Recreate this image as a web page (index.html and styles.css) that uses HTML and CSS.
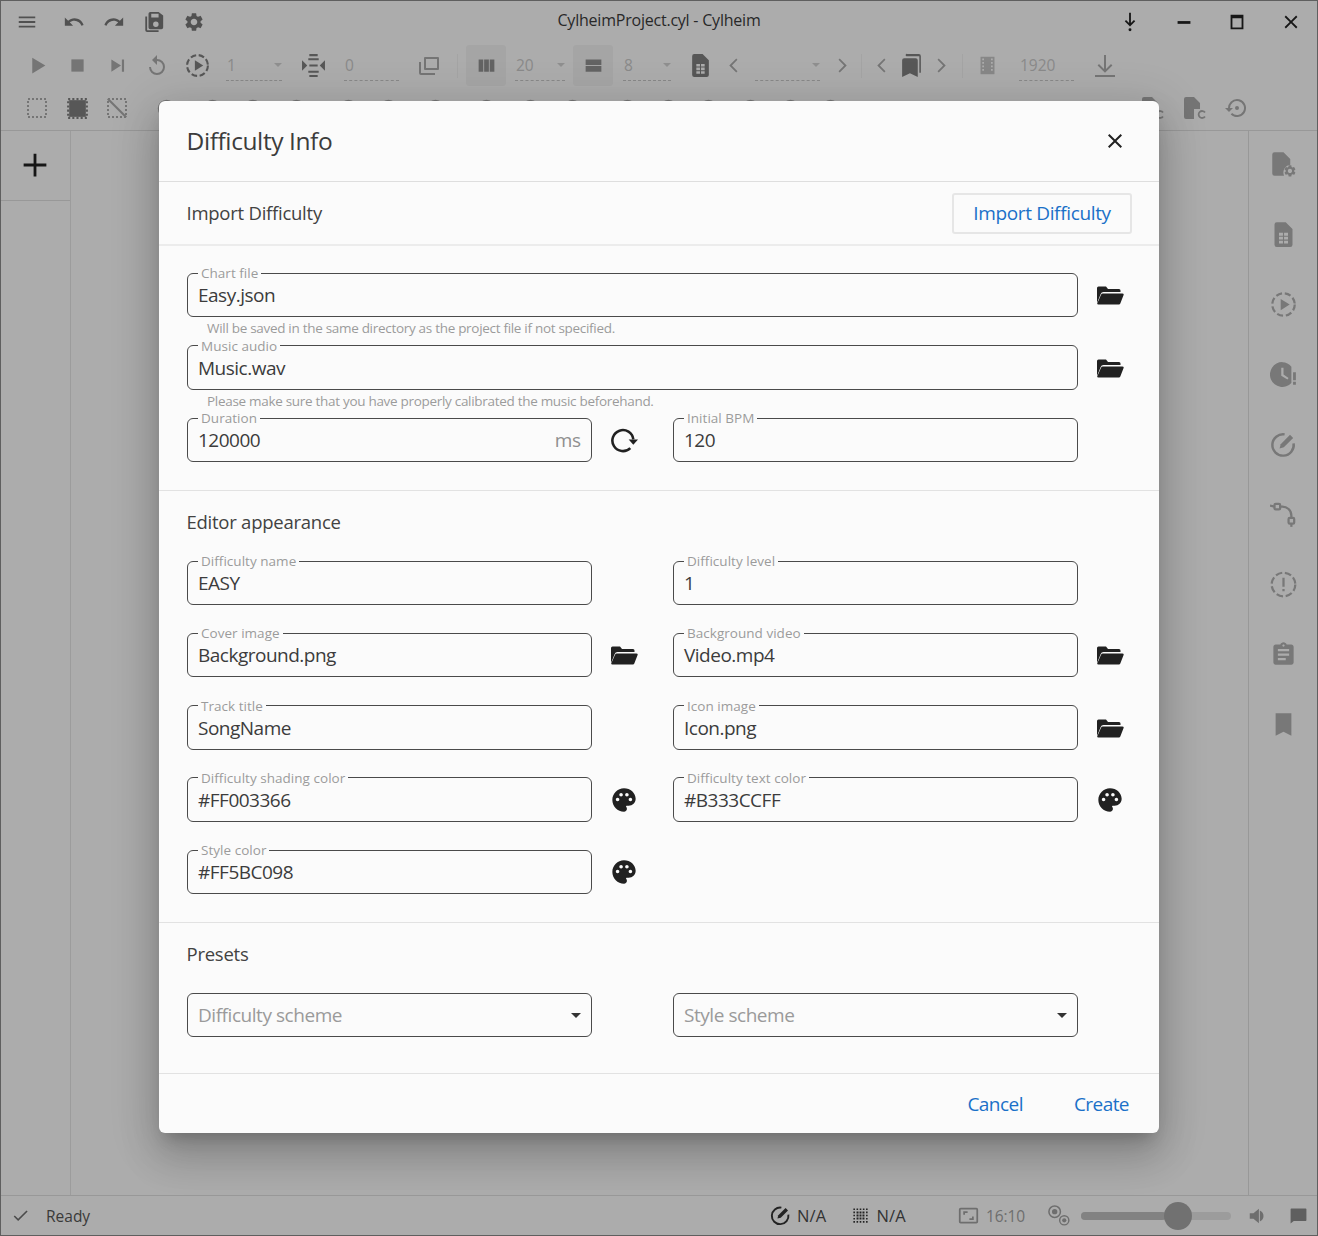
FILE: index.html
```html
<!DOCTYPE html>
<html lang="en">
<head>
<meta charset="utf-8">
<title>Cylheim</title>
<link rel="stylesheet" href="styles.css">
</head>
<body>
<svg class="defs" aria-hidden="true">
  <symbol id="menu" viewBox="0 0 24 24"><path d="M3 18h18v-2H3v2zm0-5h18v-2H3v2zm0-7v2h18V6H3z"/></symbol>
  <symbol id="undo" viewBox="0 0 24 24"><path d="M12.5 8c-2.65 0-5.05.99-6.9 2.6L2 7v9h9l-3.62-3.62c1.39-1.16 3.16-1.88 5.12-1.88 3.54 0 6.55 2.31 7.6 5.5l2.37-.78C21.08 11.03 17.15 8 12.5 8z"/></symbol>
  <symbol id="redo" viewBox="0 0 24 24"><path d="M18.4 10.6C16.55 8.99 14.15 8 11.5 8c-4.65 0-8.58 3.03-9.96 7.22L3.9 16c1.05-3.19 4.05-5.5 7.6-5.5 1.95 0 3.73.72 5.12 1.88L13 16h9V7l-3.6 3.6z"/></symbol>
  <symbol id="saveall" viewBox="0 0 24 24"><path d="M2.5 6H4.500V21H17v2H4.500a2 2 0 0 1-2-2z"/><path d="M8 1h9l5 4v13a2 2 0 0 1-2 2H8a2 2 0 0 1-2-2V3a2 2 0 0 1 2-2zm1 2v4h8V3zm5 8.500a3 3 0 1 0 0 6 3 3 0 0 0 0-6z" fill-rule="evenodd"/></symbol>
  <symbol id="gear" viewBox="0 0 24 24"><path d="M19.140 12.940c.04-.3.06-.61.06-.94 0-.32-.02-.64-.07-.94l2.030-1.580c.18-.14.23-.41.12-.61l-1.920-3.320c-.12-.22-.37-.29-.59-.22l-2.390.96c-.5-.38-1.030-.7-1.620-.94l-.36-2.540c-.04-.24-.24-.41-.48-.41h-3.840c-.24 0-.43.17-.47.41l-.36 2.540c-.59.24-1.130.57-1.620.94l-2.390-.96c-.22-.08-.47 0-.59.22L2.740 8.870c-.12.21-.08.47.12.61l2.030 1.580c-.05.3-.09.63-.09.94s.02.64.07.94l-2.030 1.580c-.18.14-.23.41-.12.61l1.920 3.320c.12.22.37.29.59.22l2.390-.96c.5.38 1.030.7 1.620.94l.36 2.540c.05.24.24.41.48.41h3.840c.24 0 .44-.17.47-.41l.36-2.540c.59-.24 1.130-.56 1.620-.94l2.390.96c.22.08.47 0 .59-.22l1.920-3.320c.12-.22.07-.47-.12-.61l-2.010-1.580zM12 15.600c-1.980 0-3.600-1.620-3.600-3.600s1.620-3.600 3.600-3.600 3.600 1.620 3.600 3.600-1.620 3.600-3.600 3.600z"/></symbol>
  <symbol id="pin" viewBox="0 0 24 24"><path d="M11 2h2v11l3.300-3.300 1.400 1.400L12 16.800l-5.700-5.700 1.400-1.400L11 13z"/><circle cx="12" cy="20.500" r="1.600"/></symbol>
  <symbol id="min" viewBox="0 0 24 24"><rect x="5" y="11" width="14" height="3"/></symbol>
  <symbol id="max" viewBox="0 0 24 24"><path d="M5 4h14v16H5zm2 4v10h10V8z" fill-rule="evenodd"/></symbol>
  <symbol id="close" viewBox="0 0 24 24"><path d="M19 6.410L17.590 5 12 10.590 6.410 5 5 6.410 10.590 12 5 17.590 6.410 19 12 13.410 17.590 19 19 17.590 13.410 12z"/></symbol>
  <symbol id="play" viewBox="0 0 24 24"><path d="M6 3l15 9-15 9z"/></symbol>
  <symbol id="stop" viewBox="0 0 24 24"><rect x="5" y="5" width="14" height="14"/></symbol>
  <symbol id="next" viewBox="0 0 24 24"><path d="M5 5l11 7-11 7zM17 5h2.500v14H17z"/></symbol>
  <symbol id="replay" viewBox="0 0 24 24"><path d="M12 5V1L7 6l5 5V7a6 6 0 1 1-6 6H4a8 8 0 1 0 8-8z"/></symbol>
  <symbol id="dashplay" viewBox="0 0 24 24"><circle cx="12" cy="12" r="10" fill="none" stroke="currentColor" stroke-width="2" stroke-dasharray="5.500 2.500"/><path d="M9.500 7l8 5-8 5z"/></symbol>
  <symbol id="fit" viewBox="0 0 24 24"><path d="M8 1h8v2H8zM7 5h10v2H7zM8 11h8v2H8zM7 17h10v2H7zM8 21h8v2H8zM1 7l5 5-5 5zM23 7l-5 5 5 5z"/></symbol>
  <symbol id="layers" viewBox="0 0 24 24"><path d="M8 3h13a1 1 0 0 1 1 1v11a1 1 0 0 1-1 1H8a1 1 0 0 1-1-1V4a1 1 0 0 1 1-1zm1 2v9h11V5zM2 8h2v11h14v2H4a2 2 0 0 1-2-2z" fill-rule="evenodd"/></symbol>
  <symbol id="cols" viewBox="0 0 24 24"><path d="M3 5h5.300v14H3zM9.300 5h5.400v14H9.300zM15.700 5H21v14h-5.300z"/></symbol>
  <symbol id="rows" viewBox="0 0 24 24"><path d="M3 5h18v6.300H3zM3 12.700h18V19H3z"/></symbol>
  <symbol id="filegrid" viewBox="0 0 24 24"><path d="M14 1H6a2 2 0 0 0-2 2v18a2 2 0 0 0 2 2h12a2 2 0 0 0 2-2V7zM8 10.500h3.500V13H8zm4.500 0H16V13h-3.500zM8 14h3.500v2.500H8zm4.500 0H16v2.500h-3.500zM8 17.500h3.500V20H8zm4.500 0H16V20h-3.500z" fill-rule="evenodd"/></symbol>
  <symbol id="left" viewBox="0 0 24 24"><path d="M15.400 5.400L9 12l6.400 6.600L14 20l-8-8 8-8z"/></symbol>
  <symbol id="right" viewBox="0 0 24 24"><path d="M8.600 5.400L15 12l-6.400 6.600L10 20l8-8-8-8z"/></symbol>
  <symbol id="bookmarks" viewBox="0 0 24 24"><path d="M16 5H5a2 2 0 0 0-2 2v16l7.500-3.500L18 23V7a2 2 0 0 0-2-2z"/><path d="M8 1h11a2 2 0 0 1 2 2v16h-1.500V3H7a1 1 0 0 1 1-2z"/></symbol>
  <symbol id="film" viewBox="0 0 24 24"><path d="M4 2h16v20H4zM6 4v2h2V4zm0 4v2h2V8zm0 4v2h2v-2zm0 4v2h2v-2zM16 4v2h2V4zm0 4v2h2V8zm0 4v2h2v-2zm0 4v2h2v-2z" fill-rule="evenodd"/></symbol>
  <symbol id="download" viewBox="0 0 24 24"><path d="M11 1h2v14l5-5 1.400 1.400L12 18.800l-7.400-7.400L6 10l5 5zM2 21h20v2H2z"/></symbol>
  <symbol id="selnone" viewBox="0 0 24 24"><rect x="3" y="3" width="18" height="18" fill="none" stroke="currentColor" stroke-width="2" stroke-dasharray="2 2"/></symbol>
  <symbol id="selall" viewBox="0 0 24 24"><rect x="3" y="3" width="18" height="18" fill="none" stroke="currentColor" stroke-width="2" stroke-dasharray="2 2"/><rect x="4" y="4" width="16" height="16"/></symbol>
  <symbol id="selinv" viewBox="0 0 24 24"><rect x="3" y="3" width="18" height="18" fill="none" stroke="currentColor" stroke-width="2" stroke-dasharray="2 2"/><path d="M2 3.500L3.500 2 22 20.500 20.500 22z"/></symbol>
  <symbol id="blob" viewBox="0 0 24 24"><circle cx="12" cy="12" r="9" fill="none" stroke="currentColor" stroke-width="2"/></symbol>
  <symbol id="filesync" viewBox="0 0 24 24"><path d="M12 1H4a2 2 0 0 0-2 2v18a2 2 0 0 0 2 2h8V13h6V7z"/><path d="M23 16.500a3.500 3.500 0 1 0 0 4" fill="none" stroke="currentColor" stroke-width="1.800"/></symbol>
  <symbol id="history" viewBox="0 0 24 24"><path d="M13 3a9 9 0 0 0-9 9H1l4 4 4-4H6a7 7 0 1 1 2.100 5l-1.400 1.400A9 9 0 1 0 13 3z"/><circle cx="13" cy="12" r="2"/></symbol>
  <symbol id="plus" viewBox="0 0 24 24"><path d="M13.300 1.500v9.200h9.200v2.600h-9.200v9.200h-2.600v-9.200H1.500v-2.600h9.200V1.500z"/></symbol>
  <symbol id="filegear" viewBox="0 0 24 24"><path d="M12 1H4a2 2 0 0 0-2 2v17a2 2 0 0 0 2 2h8.500A7 7 0 0 1 18 12.200V7z"/><g transform="translate(11.500 11.500) scale(.52)"><path d="M19.140 12.940c.04-.3.06-.61.06-.94 0-.32-.02-.64-.07-.94l2.030-1.580c.18-.14.23-.41.12-.61l-1.920-3.320c-.12-.22-.37-.29-.59-.22l-2.390.96c-.5-.38-1.030-.7-1.620-.94l-.36-2.540c-.04-.24-.24-.41-.48-.41h-3.840c-.24 0-.43.17-.47.41l-.36 2.540c-.59.24-1.130.57-1.620.94l-2.390-.96c-.22-.08-.47 0-.59.22L2.740 8.870c-.12.21-.08.47.12.61l2.030 1.580c-.05.3-.09.63-.09.94s.02.64.07.94l-2.030 1.580c-.18.14-.23.41-.12.61l1.920 3.320c.12.22.37.29.59.22l2.390-.96c.5.38 1.030.7 1.620.94l.36 2.540c.05.24.24.41.48.41h3.840c.24 0 .44-.17.47-.41l.36-2.540c.59-.24 1.130-.56 1.620-.94l2.390.96c.22.08.47 0 .59-.22l1.920-3.320c.12-.22.07-.47-.12-.61l-2.010-1.580zM12 15.600c-1.980 0-3.600-1.620-3.600-3.600s1.620-3.600 3.600-3.600 3.600 1.620 3.600 3.600-1.620 3.600-3.600 3.600z" fill-rule="evenodd"/></g></symbol>
  <symbol id="clockalert" viewBox="0 0 24 24"><path d="M11 1a11 11 0 1 0 8 18.500V5A11 11 0 0 0 11 1zm4.500 15.500L10 13V6h2v6l4.500 3z" fill-rule="evenodd"/><path d="M20.500 10h2.500v7h-2.500zM20.500 18.500h2.500V21h-2.500z"/></symbol>
  <symbol id="editcircle" viewBox="0 0 24 24"><path d="M13 3A9.500 9.500 0 1 0 21 11" fill="none" stroke="currentColor" stroke-width="2.200"/><path d="M8.500 15.500l1-3.800 8.300-8.300 2.800 2.800-8.300 8.300z"/></symbol>
  <symbol id="curve" viewBox="0 0 24 24"><path d="M9 5h2c4 0 8 3 8 8v2" fill="none" stroke="currentColor" stroke-width="2"/><path d="M0 4l4 1" stroke="currentColor" stroke-width="2"/><path d="M19 20v3" stroke="currentColor" stroke-width="2"/><rect x="4" y="2.500" width="5" height="5" rx="1" fill="none" stroke="currentColor" stroke-width="2"/><rect x="16.500" y="15" width="5" height="5" rx="1" fill="none" stroke="currentColor" stroke-width="2"/></symbol>
  <symbol id="dashalert" viewBox="0 0 24 24"><circle cx="12" cy="12" r="10.500" fill="none" stroke="currentColor" stroke-width="2" stroke-dasharray="6 2.400"/><path d="M11 6h2v8h-2zM11 16h2v2h-2z"/></symbol>
  <symbol id="assign" viewBox="0 0 24 24"><path d="M19 3h-4.180C14.400 1.840 13.300 1 12 1c-1.300 0-2.400.84-2.820 2H5c-1.100 0-2 .9-2 2v14c0 1.100.9 2 2 2h14c1.100 0 2-.9 2-2V5c0-1.100-.9-2-2-2zm-7 0c.55 0 1 .45 1 1s-.45 1-1 1-1-.45-1-1 .45-1 1-1zm2 14H7v-2h7v2zm3-4H7v-2h10v2zm0-4H7V7h10v2z"/></symbol>
  <symbol id="bookmark" viewBox="0 0 24 24"><path d="M5 2h14v20l-7-3.500L5 22z"/></symbol>
  <symbol id="check" viewBox="0 0 24 24"><path d="M9 16.200L4.800 12l-1.400 1.400L9 19 21 7l-1.400-1.400z"/></symbol>
  <symbol id="dotgrid" viewBox="0 0 24 24"><path d="M3 3h2v2H3zm4 0h2v2H7zm4 0h2v2h-2zm4 0h2v2h-2zm4 0h2v2h-2zM3 19h2v2H3zm4 0h2v2H7zm4 0h2v2h-2zm4 0h2v2h-2zm4 0h2v2h-2zM3 7h2v2H3zm0 4h2v2H3zm0 4h2v2H3zm16-8h2v2h-2zm0 4h2v2h-2zm0 4h2v2h-2zM7 7h2.500v2.500H7zm3.800 0h2.400v2.500h-2.400zm3.700 0H17v2.500h-2.500zM7 10.800h2.500v2.400H7zm3.800 0h2.400v2.400h-2.400zm3.700 0H17v2.400h-2.500zM7 14.500h2.500V17H7zm3.800 0h2.400V17h-2.400zm3.700 0H17V17h-2.500z"/></symbol>
  <symbol id="aspect" viewBox="0 0 24 24"><path d="M3 3h18a2 2 0 0 1 2 2v14a2 2 0 0 1-2 2H3a2 2 0 0 1-2-2V5a2 2 0 0 1 2-2zm0 2v14h18V5zm3 2h5v2H8v2H6zm12 10h-5v-2h3v-2h2z" fill-rule="evenodd"/></symbol>
  <symbol id="rings" viewBox="0 0 24 24"><circle cx="8" cy="8" r="6" fill="none" stroke="currentColor" stroke-width="1.600"/><circle cx="8" cy="8" r="2.800"/><circle cx="18" cy="17" r="4.800" fill="none" stroke="currentColor" stroke-width="1.500"/><circle cx="18" cy="17" r="2.200"/></symbol>
  <symbol id="volume" viewBox="0 0 24 24"><path d="M3 9v6h4l6 5V4L7 9zm11 -3v12a6.500 6.500 0 0 0 0-12z"/></symbol>
  <symbol id="chat" viewBox="0 0 24 24"><path d="M3 3h18a1 1 0 0 1 1 1v14a1 1 0 0 1-1 1H6l-4 3V4a1 1 0 0 1 1-1z"/></symbol>
  <symbol id="folder" viewBox="0 0 28 24"><path d="M1 20V5a1.500 1.500 0 0 1 1.500-1.500h7.500L12 6h11a1.500 1.500 0 0 1 1.500 1.500V9H7.500a3 3 0 0 0-2.800 2z"/><path d="M6.800 10.500H26.300a1.300 1.300 0 0 1 1.200 1.800l-3.200 8.200a1.500 1.500 0 0 1-1.400 1H2.300a1 1 0 0 1-.9-1.400l3.600-8.400a2 2 0 0 1 1.800-1.200z"/></symbol>
  <symbol id="refresh" viewBox="0 0 24 24"><path d="M17.400 18.900A9 9 0 1 1 20 11.500" fill="none" stroke="currentColor" stroke-width="2.200"/><path d="M16 11.500h8l-4 4.500z"/></symbol>
  <symbol id="palette" viewBox="0 0 24 24"><path d="M12 2C6.490 2 2 6.490 2 12s4.490 10 10 10c1.380 0 2.500-1.120 2.500-2.500 0-.61-.23-1.200-.64-1.670-.08-.1-.13-.21-.13-.33 0-.28.22-.5.5-.5H16c3.310 0 6-2.690 6-6 0-4.960-4.490-9-10-9zm5.500 11c-.83 0-1.500-.67-1.500-1.500s.67-1.500 1.500-1.500 1.500.67 1.500 1.500-.67 1.500-1.500 1.500zm-3-4c-.83 0-1.500-.67-1.500-1.500S13.670 6 14.500 6s1.500.67 1.500 1.500S15.330 9 14.500 9zM5 11.500c0-.83.67-1.500 1.500-1.500s1.500.67 1.500 1.500S7.330 13 6.500 13 5 12.330 5 11.500zm6-4c0 .83-.67 1.500-1.500 1.500S8 8.330 8 7.500 8.670 6 9.500 6s1.500.67 1.500 1.500z"/></symbol>
</svg>

<div class="app">
  <header class="titlebar">
    <div class="tb-left">
      <span class="cell dark m7"><svg class="ic"><use href="#menu"/></svg></span>
      <span class="cell dark m7"><svg class="ic"><use href="#undo"/></svg></span>
      <span class="cell dark"><svg class="ic"><use href="#redo"/></svg></span>
      <span class="cell dark"><svg class="ic"><use href="#saveall"/></svg></span>
      <span class="cell dark"><svg class="ic"><use href="#gear"/></svg></span>
    </div>
    <div class="app-title">CylheimProject.cyl - Cylheim</div>
    <div class="tb-right">
      <span class="wctl"><svg class="ic"><use href="#pin"/></svg></span>
      <span class="wctl"><svg class="ic"><use href="#min"/></svg></span>
      <span class="wctl"><svg class="ic"><use href="#max"/></svg></span>
      <span class="wctl"><svg class="ic"><use href="#close"/></svg></span>
    </div>
  </header>

  <div class="toolbar row1">
    <span class="cell"><svg class="ic"><use href="#play"/></svg></span>
    <span class="cell"><svg class="ic"><use href="#stop"/></svg></span>
    <span class="cell"><svg class="ic"><use href="#next"/></svg></span>
    <span class="cell big"><svg class="ic"><use href="#replay"/></svg></span>
    <span class="cell strong"><svg class="ic"><use href="#dashplay"/></svg></span>
    <span class="combo w56 m9">1<i class="caret"></i></span>
    <span class="cell strong m11"><svg class="ic"><use href="#fit"/></svg></span>
    <span class="combo w55 m11">0</span>
    <span class="cell big m10"><svg class="ic"><use href="#layers"/></svg></span>
    <span class="sep m8"></span>
    <span class="cell on m8"><svg class="ic"><use href="#cols"/></svg></span>
    <span class="combo w50 m9">20<i class="caret"></i></span>
    <span class="cell on m8"><svg class="ic"><use href="#rows"/></svg></span>
    <span class="combo w48 m10">8<i class="caret"></i></span>
    <span class="cell strong m9"><svg class="ic"><use href="#filegrid"/></svg></span>
    <span class="chev m2"><svg class="ic"><use href="#left"/></svg></span>
    <span class="combo w65 m9"><i class="caret"></i></span>
    <span class="chev m9"><svg class="ic"><use href="#right"/></svg></span>
    <span class="sep m8"></span>
    <span class="chev m8"><svg class="ic"><use href="#left"/></svg></span>
    <span class="cell strong n3"><svg class="ic"><use href="#bookmarks"/></svg></span>
    <span class="chev n3"><svg class="ic"><use href="#right"/></svg></span>
    <span class="sep m10"></span>
    <span class="cell faint-ic m4"><svg class="ic"><use href="#film"/></svg></span>
    <span class="combo w55 m12">1920</span>
    <span class="cell big m11"><svg class="ic"><use href="#download"/></svg></span>
  </div>

  <div class="toolbar row2">
    <span class="cell big"><svg class="ic"><use href="#selnone"/></svg></span>
    <span class="cell big strong"><svg class="ic"><use href="#selall"/></svg></span>
    <span class="cell big"><svg class="ic"><use href="#selinv"/></svg></span>
    <span class="cell m9"><svg class="ic"><use href="#blob"/></svg></span>
    <span class="cell m6"><svg class="ic"><use href="#blob"/></svg></span>
    <span class="cell"><svg class="ic"><use href="#blob"/></svg></span>
    <span class="cell m4"><svg class="ic"><use href="#blob"/></svg></span>
    <span class="cell m12"><svg class="ic"><use href="#blob"/></svg></span>
    <span class="cell"><svg class="ic"><use href="#blob"/></svg></span>
    <span class="cell m7"><svg class="ic"><use href="#blob"/></svg></span>
    <span class="cell m11"><svg class="ic"><use href="#blob"/></svg></span>
    <span class="cell m4"><svg class="ic"><use href="#blob"/></svg></span>
    <span class="cell m2"><svg class="ic"><use href="#blob"/></svg></span>
    <span class="cell m15"><svg class="ic"><use href="#blob"/></svg></span>
    <span class="cell m1"><svg class="ic"><use href="#blob"/></svg></span>
    <span class="cell"><svg class="ic"><use href="#blob"/></svg></span>
    <span class="cell m2"><svg class="ic"><use href="#blob"/></svg></span>
    <span class="cell"><svg class="ic"><use href="#blob"/></svg></span>
    <span class="cell"><svg class="ic"><use href="#blob"/></svg></span>
    <span class="push"></span>
    <span class="cell big"><svg class="ic"><use href="#filesync"/></svg></span>
    <span class="cell big n2"><svg class="ic"><use href="#filesync"/></svg></span>
    <span class="cell big n2 r1"><svg class="ic"><use href="#history"/></svg></span>
  </div>

  <main class="workspace">
    <aside class="left-rail">
      <div class="add"><svg class="ic plus"><use href="#plus"/></svg></div>
    </aside>
    <div class="canvas"></div>
    <aside class="right-rail">
      <svg class="ic"><use href="#filegear"/></svg>
      <svg class="ic"><use href="#filegrid"/></svg>
      <svg class="ic"><use href="#dashplay"/></svg>
      <svg class="ic"><use href="#clockalert"/></svg>
      <svg class="ic"><use href="#editcircle"/></svg>
      <svg class="ic"><use href="#curve"/></svg>
      <svg class="ic"><use href="#dashalert"/></svg>
      <svg class="ic"><use href="#assign"/></svg>
      <svg class="ic"><use href="#bookmark"/></svg>
    </aside>
  </main>

  <footer class="statusbar">
    <svg class="ic sm check"><use href="#check"/></svg>
    <span class="ready">Ready</span>
    <span class="push"></span>
    <svg class="ic sm st-dark edit-ic"><use href="#editcircle"/></svg>
    <span class="st-val na">N/A</span>
    <svg class="ic sm st-dark grid-ic"><use href="#dotgrid"/></svg>
    <span class="st-val na">N/A</span>
    <svg class="ic sm aspect"><use href="#aspect"/></svg>
    <span class="st-val faint">16:10</span>
    <svg class="ic sm rings"><use href="#rings"/></svg>
    <div class="slider"><div class="slider-fill"></div><div class="slider-thumb"></div></div>
    <svg class="ic sm vol"><use href="#volume"/></svg>
    <svg class="ic sm chat"><use href="#chat"/></svg>
  </footer>
</div>

<div class="overlay"></div>

<section class="dialog">
  <div class="dlg-head">
    <h1>Difficulty Info</h1>
    <svg class="ic-btn close"><use href="#close"/></svg>
  </div>

  <div class="import-row">
    <h2>Import Difficulty</h2>
    <button class="outline" type="button">Import Difficulty</button>
  </div>

  <div class="form-sec first">
    <div class="line">
      <fieldset class="field"><legend>Chart file</legend><div class="val">Easy.json</div></fieldset>
      <span class="slot"><svg class="folder"><use href="#folder"/></svg></span>
    </div>
    <p class="hint">Will be saved in the same directory as the project file if not specified.</p>
    <div class="line">
      <fieldset class="field"><legend>Music audio</legend><div class="val">Music.wav</div></fieldset>
      <span class="slot"><svg class="folder"><use href="#folder"/></svg></span>
    </div>
    <p class="hint">Please make sure that you have properly calibrated the music beforehand.</p>
    <div class="grid">
      <div class="line">
        <fieldset class="field"><legend>Duration</legend><div class="val split"><span>120000</span><span class="unit">ms</span></div></fieldset>
        <span class="slot"><svg class="glyph"><use href="#refresh"/></svg></span>
      </div>
      <div class="line">
        <fieldset class="field"><legend>Initial BPM</legend><div class="val">120</div></fieldset>
        <span class="slot"></span>
      </div>
    </div>
  </div>

  <div class="form-sec">
    <h2>Editor appearance</h2>
    <div class="grid">
      <div class="line">
        <fieldset class="field"><legend>Difficulty name</legend><div class="val">EASY</div></fieldset>
        <span class="slot"></span>
      </div>
      <div class="line">
        <fieldset class="field"><legend>Difficulty level</legend><div class="val">1</div></fieldset>
        <span class="slot"></span>
      </div>
      <div class="line">
        <fieldset class="field"><legend>Cover image</legend><div class="val">Background.png</div></fieldset>
        <span class="slot"><svg class="folder"><use href="#folder"/></svg></span>
      </div>
      <div class="line">
        <fieldset class="field"><legend>Background video</legend><div class="val">Video.mp4</div></fieldset>
        <span class="slot"><svg class="folder"><use href="#folder"/></svg></span>
      </div>
      <div class="line">
        <fieldset class="field"><legend>Track title</legend><div class="val">SongName</div></fieldset>
        <span class="slot"></span>
      </div>
      <div class="line">
        <fieldset class="field"><legend>Icon image</legend><div class="val">Icon.png</div></fieldset>
        <span class="slot"><svg class="folder"><use href="#folder"/></svg></span>
      </div>
      <div class="line">
        <fieldset class="field"><legend>Difficulty shading color</legend><div class="val">#FF003366</div></fieldset>
        <span class="slot"><svg class="glyph"><use href="#palette"/></svg></span>
      </div>
      <div class="line">
        <fieldset class="field"><legend>Difficulty text color</legend><div class="val">#B333CCFF</div></fieldset>
        <span class="slot"><svg class="glyph"><use href="#palette"/></svg></span>
      </div>
      <div class="line">
        <fieldset class="field"><legend>Style color</legend><div class="val">#FF5BC098</div></fieldset>
        <span class="slot"><svg class="glyph"><use href="#palette"/></svg></span>
      </div>
    </div>
  </div>

  <div class="form-sec presets">
    <h2>Presets</h2>
    <div class="grid">
      <div class="line">
        <div class="select"><span>Difficulty scheme</span><i class="arrow"></i></div>
        <span class="slot"></span>
      </div>
      <div class="line">
        <div class="select"><span>Style scheme</span><i class="arrow"></i></div>
        <span class="slot"></span>
      </div>
    </div>
  </div>

  <div class="dlg-foot">
    <button class="text" type="button">Cancel</button>
    <button class="text" type="button">Create</button>
  </div>
</section>
</body>
</html>
```

FILE: styles.css
```css
* { box-sizing: border-box; }
html, body { margin: 0; height: 100%; }
body {
  position: relative;
  width: 1318px;
  height: 1236px;
  overflow: hidden;
  background: #fafafa;
  color: #212121;
  font-family: "Open Sans", "Noto Sans", "Liberation Sans", sans-serif;
}
.defs { position: absolute; width: 0; height: 0; }

.app {
  display: flex;
  flex-direction: column;
  height: 1236px;
  border: 1px solid #8a8a8a;
}
.ic { width: 24px; height: 24px; fill: currentColor; color: #aaaaaa; display: block; flex: none; }

/* title bar */
.titlebar {
  display: grid;
  grid-template-columns: 1fr auto 1fr;
  align-items: center;
  height: 39px;
}
.tb-left, .tb-right { display: flex; align-items: center; }
.tb-right { justify-content: flex-end; margin-right: -1px; }
.app-title { font-size: 16px; letter-spacing: -0.22px; color: #3a3a3a; line-height: 22px; margin-bottom: 3px; }
.wctl { width: 53.750px; display: flex; justify-content: center; }
.wctl .ic { color: #222; width: 22px; height: 22px; }

.cell { width: 40px; height: 41px; display: flex; align-items: center; justify-content: center; flex: none; }
.dark .ic { color: #767676; width: 22px; height: 22px; }
.on { background: #f0f0f0; border-radius: 3px; }
.on .ic { color: #909090; }
.chev { width: 24px; display: flex; justify-content: center; flex: none; }
.chev .ic { width: 20px; height: 20px; }
.sep { width: 1px; height: 24px; background: #eeeeee; flex: none; }

/* toolbars */
.toolbar { display: flex; align-items: center; flex: none; padding-left: 16px; }
.row1 { height: 41px; margin-top: 5px; }
.toolbar .ic { width: 21px; height: 21px; }
.toolbar .big .ic { width: 24px; height: 24px; }
.toolbar .strong .ic { width: 25px; height: 25px; color: #7e7e7e; }
.toolbar .faint-ic .ic { color: #c4c4c4; }
.row2 { height: 44px; }
.combo {
  position: relative;
  height: 30px;
  line-height: 28px;
  font-size: 15.500px;
  color: #c8c8c8;
  border-bottom: 1px dashed #c6c6c6;
  flex: none;
  padding-left: 1px;
}
.caret {
  position: absolute;
  right: 0;
  top: 12px;
  border: 4px solid transparent;
  border-top: 4px solid #d0d0d0;
  border-bottom: 0;
}
.w48 { width: 48px; } .w50 { width: 50px; } .w55 { width: 55px; } .w56 { width: 56px; } .w65 { width: 65px; }
.m1 { margin-left: 1px; } .m2 { margin-left: 2px; } .m4 { margin-left: 4px; } .m6 { margin-left: 6px; }
.m7 { margin-left: 7px; } .m8 { margin-left: 8px; } .m9 { margin-left: 9px; } .m10 { margin-left: 10px; }
.m11 { margin-left: 11px; } .m12 { margin-left: 12px; } .m15 { margin-left: 15px; }
.n2 { margin-left: 2px; } .n3 { margin-left: -3px; } .r1 { margin-right: 61px; }
.tb-left .cell.m7:first-child { margin-left: 6px; margin-right: 7px; }
.tb-left .cell.m7:nth-child(2) { margin-left: 0; }
.push { flex: 1; }

/* workspace */
.workspace { flex: 1; display: flex; border-top: 1px solid #dcdcdc; min-height: 0; }
.left-rail { width: 70px; border-right: 1px solid #e2e2e2; flex: none; }
.add { height: 70px; display: flex; align-items: center; justify-content: center; border-bottom: 1px solid #dddddd; padding: 0 2px 2px 0; }
.ic.plus { color: #212121; width: 26px; height: 26px; }
.canvas { flex: 1; }
.right-rail {
  width: 69px;
  flex: none;
  border-left: 1px solid #dddddd;
  display: flex;
  flex-direction: column;
  align-items: center;
  gap: 43px;
  padding: 20px 0 0;
}
.right-rail .ic { width: 27px; height: 27px; color: #aeaeae; }

/* status bar */
.statusbar {
  height: 40px;
  flex: none;
  display: flex;
  align-items: center;
  border-top: 1px solid #dcdcdc;
  font-size: 15.500px;
  padding-left: 10px;
}
.ic.sm { width: 19px; height: 19px; }
.check { color: #6d6d6d; }
.ready { margin-left: 16px; color: #555; }
.ic.st-dark { color: #333; }
.ic.edit-ic { width: 21px; height: 21px; }
.st-val { color: #4a4a4a; margin-left: 7px; letter-spacing: -.1px; }
.st-val.na { font-size: 16.500px; letter-spacing: .2px; margin-left: 6px; }
.st-val.faint { color: #a0a0a0; }
.grid-ic { margin-left: 25px; }
.ic.aspect { width: 21px; height: 21px; margin-left: 52px; color: #a0a0a0; }
.ic.rings { width: 23px; height: 23px; margin-left: 22px; color: #a0a0a0; }
.slider { position: relative; width: 150px; height: 8px; border-radius: 4px; background: #e3e3e3; margin-left: 11px; }
.slider-fill { width: 85px; height: 8px; border-radius: 4px; background: #bdbdbd; }
.slider-thumb { position: absolute; left: 83px; top: -10px; width: 28px; height: 28px; border-radius: 50%; background: #a4a4a4; }
.ic.vol { width: 22px; height: 22px; margin-left: 16px; color: #a0a0a0; }
.ic.chat { margin-left: 20px; margin-right: 9px; color: #8a8a8a; }

/* modal */
.overlay { position: absolute; inset: 0; background: rgba(0, 0, 0, .31); }
.dialog {
  position: absolute;
  left: 159px;
  top: 101px;
  width: 1000px;
  height: 1032px;
  background: #fbfbfb;
  border-radius: 6px;
  box-shadow: 0 11px 15px -7px rgba(0,0,0,.2), 0 24px 38px 3px rgba(0,0,0,.14), 0 9px 46px 8px rgba(0,0,0,.12);
  display: flex;
  flex-direction: column;
  padding: 0 28px;
}
h1, h2, p { margin: 0; font-weight: 400; }
h1 { font-size: 24.500px; letter-spacing: -.4px; color: #3c3c3c; line-height: 34px; margin-left: -.5px; }
h2 { font-size: 18.500px; letter-spacing: -.25px; color: #424242; line-height: 26px; margin-left: -.5px; }
.dlg-head, .import-row, .form-sec, .dlg-foot { margin: 0 -28px; padding-left: 28px; padding-right: 28px; }
.dlg-head {
  height: 81px;
  flex: none;
  display: flex;
  align-items: center;
  justify-content: space-between;
  border-bottom: 1px solid #dedede;
}
.ic-btn.close { width: 24px; height: 24px; fill: #212121; margin-right: 4px; }
.import-row {
  height: 64px;
  flex: none;
  display: flex;
  align-items: center;
  justify-content: space-between;
  border-bottom: 2px solid #ececec;
}
button { font: inherit; background: none; cursor: pointer; }
.outline {
  width: 180px;
  height: 41px;
  margin-right: -1px;
  border: 2px solid #e6e6e6;
  border-radius: 3px;
  color: #1a70c8;
  font-size: 19px;
  letter-spacing: -.35px;
  padding: 0;
  background: #fbfbfb;
}
.form-sec {
  border-bottom: 1px solid #e2e2e2;
  padding-bottom: 28px;
  flex: none;
}
.form-sec.first { padding-top: 19px; }
.form-sec > h2 { height: 64px; line-height: 62px; margin-bottom: -2px; }
.grid { display: grid; grid-template-columns: 458px 458px; column-gap: 28px; row-gap: 20.250px; }
.line { display: flex; align-items: flex-end; }
.slot { width: 53.500px; height: 44px; flex: none; display: flex; align-items: center; }
.field {
  flex: 1;
  min-width: 0;
  margin: 0;
  height: 52px;
  padding: 0 10px;
  border: 1.500px solid #4a4a4a;
  border-radius: 6px;
}
legend {
  font-size: 13.500px;
  line-height: 16px;
  height: 16px;
  color: #9b9b9b;
  padding: 0 3px;
  margin-left: 0;
  letter-spacing: .03px;
}
.val {
  font-size: 19px;
  line-height: 26px;
  letter-spacing: -.5px;
  color: #3c3c3c;
  margin-top: 1px;
  white-space: nowrap;
}
.split { display: flex; justify-content: space-between; }
.unit { color: #8f8f8f; }
.hint {
  height: 20.500px;
  line-height: 22px;
  font-size: 13.500px;
  letter-spacing: -.3px;
  color: #9b9b9b;
  padding-left: 20px;
}
.folder { width: 28px; height: 24px; fill: #212121; margin-left: 18.500px; }
.glyph { width: 28px; height: 28px; fill: #212121; margin-left: 18px; color: #212121; }
.presets { padding-bottom: 36px; }
.select {
  flex: 1;
  height: 44px;
  border: 1.500px solid #4a4a4a;
  border-radius: 6px;
  display: flex;
  align-items: center;
  justify-content: space-between;
  padding: 0 10px;
  font-size: 19px;
  letter-spacing: -.45px;
  color: #9a9a9a;
}
.presets .grid { margin-top: 8px; }
.arrow { border: 5px solid transparent; border-top: 5px solid #333; border-bottom: 0; }
.dlg-foot { flex: 1; display: flex; justify-content: flex-end; align-items: center; gap: 51px; padding-right: 30px; }
.text { border: 0; padding: 0; font-size: 19px; letter-spacing: -.55px; color: #1a70c8; }
```
